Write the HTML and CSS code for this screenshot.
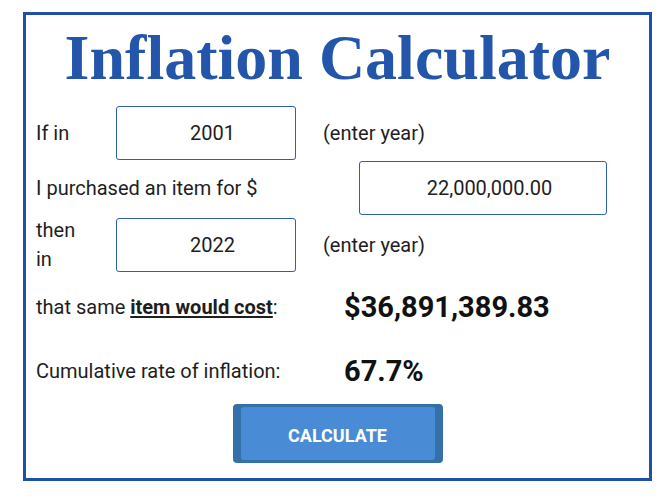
FILE: index.html
```html
<!DOCTYPE html>
<html lang="en">
<head>
  <meta charset="UTF-8">
  <meta name="viewport" content="width=device-width, initial-scale=1.0">
  <title>Inflation Calculator</title>
  <link rel="stylesheet" href="styles.css">
</head>
<body>
  <div class="calculator">
    <h1 class="title">Inflation Calculator</h1>

    <!-- Ano inicial -->
    <div class="row">
      <span class="label short">If in</span>
      <div class="field year">2001</div>
      <span class="hint">(enter year)</span>
    </div>

    <!-- Valor -->
    <div class="row row-amount">
      <span class="label wide">I purchased an item for $</span>
      <div class="field amount">22,000,000.00</div>
    </div>

    <!-- Ano final -->
    <div class="row row-then">
      <span class="label short two-lines">then<br>in</span>
      <div class="field year">2022</div>
      <span class="hint">(enter year)</span>
    </div>

    <div class="result result-cost">
      <span class="result-label">that same <u><b>item would cost</b></u>:</span>
      <span class="result-value">$36,891,389.83</span>
    </div>

    <div class="result result-rate">
      <span class="result-label">Cumulative rate of inflation:</span>
      <span class="result-value">67.7%</span>
    </div>

    <div class="actions">
      <button type="button" class="btn"><span class="btn-inner">CALCULATE</span></button>
    </div>
  </div>
</body>
</html>
```

FILE: styles.css
```css
/* Estilos basicos */
body {
  margin: 0;
  font-family: Roboto, "Liberation Sans", sans-serif;
  color: #1e1e1e;
  background: #fff;
}
.calculator {
  margin: 12px 0 0 23px;
  width: 613px;
  height: 463px;
  border: 3px solid #1f4fa8;
  padding: 0 0 0 10px;
  box-sizing: content-box;
}
.title {
  margin: 0;
  height: 91px;
  padding-right: 10px;
  text-align: center;
  font-family: "Liberation Serif", serif;
  font-weight: bold;
  font-size: 64px;
  line-height: 86px;
  color: #2356aa;
}
.row {
  display: flex;
  align-items: center;
  height: 54px;
  font-size: 20px;
}
.row-amount {
  margin-top: 1px;
}
.row-then {
  margin-top: 3px;
}
.label.short {
  width: 80px;
}
.label.wide {
  width: 323px;
}
.two-lines {
  line-height: 29px;
}
.field {
  box-sizing: border-box;
  height: 54px;
  padding-left: 13px;
  border: 1px solid #2f5faa;
  border-radius: 3px;
  display: flex;
  align-items: center;
  justify-content: center;
}
.field.year {
  width: 180px;
}
.field.amount {
  width: 248px;
}
.hint {
  margin-left: 27px;
}
.result {
  display: flex;
  align-items: center;
  height: 42px;
}
.result-cost {
  margin-top: 14px;
}
.result-rate {
  margin-top: 22px;
}
.result-label {
  width: 308px;
  font-size: 20px;
}
.result-label u {
  text-underline-offset: 2px;
}
.result-value {
  font-size: 29px;
  font-weight: bold;
  color: #111;
}
.actions {
  display: flex;
  justify-content: center;
  padding-right: 10px;
  margin-top: 12px;
}
.btn {
  width: 210px;
  height: 59px;
  padding: 3px 8px;
  border: none;
  border-radius: 4px;
  background: #3571a9;
  cursor: pointer;
}
.btn-inner {
  display: flex;
  align-items: center;
  justify-content: center;
  height: 100%;
  padding-top: 3px;
  box-sizing: border-box;
  border-radius: 3px;
  background: #4a8bd6;
  color: #fff;
  font-family: Roboto, sans-serif;
  font-weight: bold;
  font-size: 18px;
}
```
